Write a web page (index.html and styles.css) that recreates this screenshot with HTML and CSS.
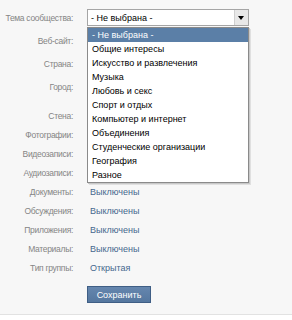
FILE: index.html
```html
<!DOCTYPE html>
<html>

<head>
    <meta charset="UTF-8" />
    <title>Настройки сообщества</title>
    <link rel="stylesheet" href="styles.css">
</head>

<body>
    <div class="settings">
        <div class="row row-top">
            <div class="label">Тема сообщества:</div>
            <div class="value">
                <div class="select">
                    <span class="select-text">- Не выбрана -</span>
                    <span class="select-arrow"></span>
                </div>
            </div>
        </div>
        <div class="row row-top">
            <div class="label">Веб-сайт:</div>
            <div class="value"></div>
        </div>
        <div class="row row-top">
            <div class="label">Страна:</div>
            <div class="value"></div>
        </div>
        <div class="row row-city">
            <div class="label">Город:</div>
            <div class="value"></div>
        </div>
        <!-- values of these rows are hidden under the open list -->
        <div class="row">
            <div class="label">Стена:</div>
            <div class="value"></div>
        </div>
        <div class="row">
            <div class="label">Фотографии:</div>
            <div class="value"></div>
        </div>
        <div class="row">
            <div class="label">Видеозаписи:</div>
            <div class="value"></div>
        </div>
        <div class="row">
            <div class="label">Аудиозаписи:</div>
            <div class="value"></div>
        </div>
        <div class="row">
            <div class="label">Документы:</div>
            <div class="value">Выключены</div>
        </div>
        <div class="row">
            <div class="label">Обсуждения:</div>
            <div class="value">Выключены</div>
        </div>
        <div class="row">
            <div class="label">Приложения:</div>
            <div class="value">Выключены</div>
        </div>
        <div class="row">
            <div class="label">Материалы:</div>
            <div class="value">Выключены</div>
        </div>
        <div class="row">
            <div class="label">Тип группы:</div>
            <div class="value">Открытая</div>
        </div>
        <div class="row row-button">
            <div class="label"></div>
            <div class="value">
                <button class="save-btn">Сохранить</button>
            </div>
        </div>

        <!-- open list of the theme select -->
        <ul class="dropdown">
            <li class="selected">- Не выбрана -</li>
            <li>Общие интересы</li>
            <li>Искусство и развлечения</li>
            <li>Музыка</li>
            <li>Любовь и секс</li>
            <li>Спорт и отдых</li>
            <li>Компьютер и интернет</li>
            <li>Объединения</li>
            <li>Студенческие организации</li>
            <li>География</li>
            <li>Разное</li>
        </ul>
    </div>
    <div class="footer"></div>
</body>

</html>
```

FILE: styles.css
```css
body {
    font-family: "Liberation Sans", Arial, sans-serif;
    font-size: 9px;
    margin: 0;
    padding: 0;
    background-color: #f7f7f7;
}

.settings {
    position: relative;
    height: 314px;
    padding-top: 9px;
    box-sizing: border-box;
}

.row {
    display: grid;
    grid-template-columns: 73px 1fr;
    column-gap: 14px;
    align-items: center;
    height: 17px;
    margin-bottom: 2px;
}

.row-top {
    margin-bottom: 6px;
}

.row-city {
    margin-bottom: 12px;
}

.row-button {
    margin-top: 10px;
}

.label {
    color: #858585;
    font-size: 8.5px;
    letter-spacing: -0.3px;
    text-align: right;
    white-space: nowrap;
}

.value {
    color: #45688e;
    padding-left: 3px;
}

.row-top .value,
.row-button .value {
    padding-left: 0;
}

.select {
    display: flex;
    align-items: center;
    width: 162px;
    height: 17px;
    box-sizing: border-box;
    border: 1px solid #a5a5a5;
    background-color: #fff;
    color: #000;
}

.select-text {
    flex: 1;
    padding-left: 3px;
}

.select-arrow {
    position: relative;
    width: 13px;
    height: 15px;
    background-color: #e8e8e8;
    border-left: 1px solid #d0d0d0;
}

.select-arrow::after {
    content: "";
    position: absolute;
    left: 3px;
    top: 6px;
    border-left: 3.5px solid transparent;
    border-right: 3.5px solid transparent;
    border-top: 4px solid #000;
}

.save-btn {
    width: 64px;
    height: 17px;
    padding: 0;
    background-color: #5a7ca5;
    background-image: linear-gradient(#6586ae, #55779f);
    border: 1px solid #3f5e85;
    color: #fff;
    font-family: inherit;
    font-size: 9px;
    cursor: pointer;
}

.dropdown {
    position: absolute;
    left: 87px;
    top: 27px;
    width: 162px;
    margin: 0;
    padding: 0;
    list-style: none;
    background-color: #fff;
    border: 1px solid #8a8a8a;
    box-shadow: 1px 1px 0 #c8c8c8, 2px 2px 0 #e0e0e0;
    box-sizing: border-box;
}

.dropdown li {
    height: 14px;
    line-height: 14px;
    padding-left: 4px;
    color: #000;
}

.dropdown li.selected {
    background-color: #5b7fa7;
    color: #fff;
}

.footer {
    height: 6px;
    border-top: 1px solid #e2e2e2;
    background-color: #fff;
}
```
